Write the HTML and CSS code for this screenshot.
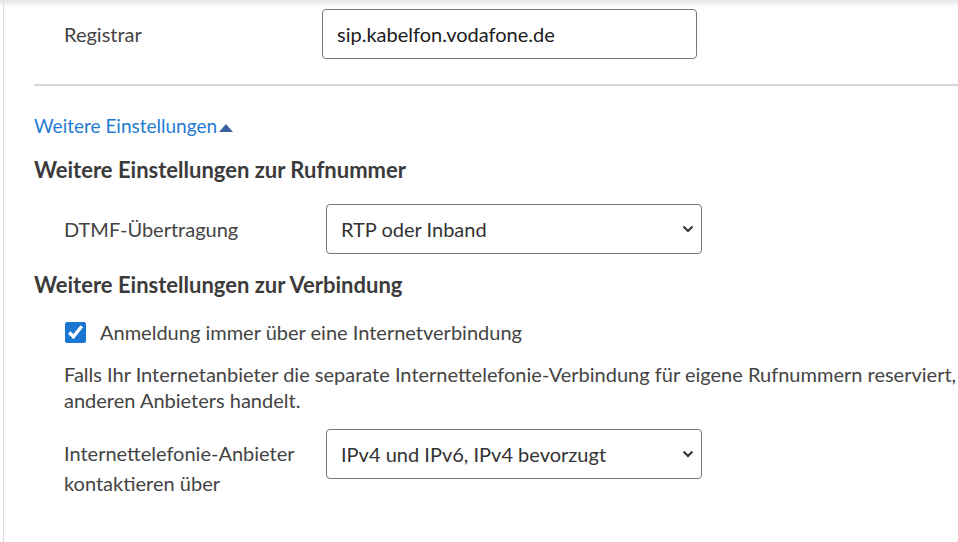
FILE: index.html
```html
<!DOCTYPE HTML>
<html>
    <head>
        <meta charset="UTF-8">
        <title>Internettelefonie</title>
        <link rel="stylesheet" href="styles.css">
    </head>
    <body>
        <div class="topshade"></div>
        <div id="wrap">
            <!--Registrar-->
            <div class="row first">
                <label class="lbl" for="registrar">Registrar</label>
                <input class="field" id="registrar" type="text" value="sip.kabelfon.vodafone.de">
            </div>
            <hr class="sep">

            <a class="more" href="#">Weitere Einstellungen<span class="tri"></span></a>

            <h3 class="head">Weitere Einstellungen zur Rufnummer</h3>
            <div class="row">
                <label class="lbl" for="dtmf">DTMF-Übertragung</label>
                <div class="selbox">
                    <select id="dtmf" class="sel">
                        <option>RTP oder Inband</option>
                    </select>
                    <svg class="chev" width="12" height="8" viewBox="0 0 12 8"><path d="M1.5 1.5 L6 6 L10.5 1.5" fill="none" stroke="#333" stroke-width="2"/></svg>
                </div>
            </div>

            <h3 class="head">Weitere Einstellungen zur Verbindung</h3>
            <div class="check">
                <input type="checkbox" id="always" checked>
                <label for="always">Anmeldung immer über eine Internetverbindung</label>
            </div>
            <p class="hint">Falls Ihr Internetanbieter die separate Internettelefonie-Verbindung für eigene Rufnummern reserviert, auch<br>anderen Anbieters handelt.</p>

            <div class="row top">
                <label class="lbl two" for="proto">Internettelefonie-Anbieter<br>kontaktieren über</label>
                <div class="selbox">
                    <select id="proto" class="sel">
                        <option>IPv4 und IPv6, IPv4 bevorzugt</option>
                    </select>
                    <svg class="chev" width="12" height="8" viewBox="0 0 12 8"><path d="M1.5 1.5 L6 6 L10.5 1.5" fill="none" stroke="#333" stroke-width="2"/></svg>
                </div>
            </div>
        </div>
    </body>
</html>
```

FILE: styles.css
```css
html,body{margin:0;padding:0;overflow:hidden;background:#fff;}
body{font-family:"Lato","Noto Sans",sans-serif;font-size:20px;color:#444;height:542px;position:relative;}
.topshade{
    position:absolute;
    left:0;
    top:0;
    width:100%;
    height:7px;
    background:linear-gradient(#e4e6e6,rgba(255,255,255,0));
}
#wrap{
    width:1400px;
    height:542px;
    margin-left:3px;
    border-left:1px solid #dcdcdc;
    padding-left:30px;
}
.row{
    display:flex;
    align-items:center;
    padding-left:30px;
}
.row.first{padding-top:9px;}
.row.top{align-items:flex-start;margin-top:16px;}
.lbl{
    width:262px;
    flex:none;
    line-height:30px;
}
.first .lbl{width:258px;}
.two{padding-top:9px;}
.field{
    box-sizing:border-box;
    width:375px;
    height:50px;
    border:1px solid #777;
    border-radius:4px;
    padding:0 14px;
    font:inherit;
    color:#1b1b1b;
    outline:none;
}
.sep{
    margin:25px 0 0 0;
    border:0;
    border-top:2px solid #d6d6d6;
}
.more{
    display:inline-block;
    margin-top:27px;
    font-size:19px;
    color:#1f7bd3;
    text-decoration:none;
    line-height:26px;
}
.tri{
    display:inline-block;
    width:0;
    height:0;
    margin-left:2px;
    border-left:7px solid transparent;
    border-right:7px solid transparent;
    border-bottom:8px solid #3d5f9c;
    vertical-align:1px;
}
.head{
    margin:18px 0 21px 0;
    font-size:22px;
    font-weight:bold;
    color:#3b3b3b;
    line-height:26px;
}
.selbox{
    position:relative;
    width:376px;
    height:50px;
}
.sel{
    box-sizing:border-box;
    width:100%;
    height:100%;
    -webkit-appearance:none;
    appearance:none;
    border:1px solid #777;
    border-radius:4px;
    background:#fff;
    padding:0 14px;
    font:inherit;
    color:#333;
    outline:none;
}
.chev{
    position:absolute;
    right:8px;
    top:21px;
    pointer-events:none;
}
.check{
    display:flex;
    align-items:center;
    padding-left:31px;
    margin-top:22px;
}
.check input{
    width:21px;
    height:21px;
    margin:0 14px 0 0;
    accent-color:#1976d2;
}
.hint{
    margin:17px 0 0 30px;
    line-height:26px;
    white-space:nowrap;
}
```
